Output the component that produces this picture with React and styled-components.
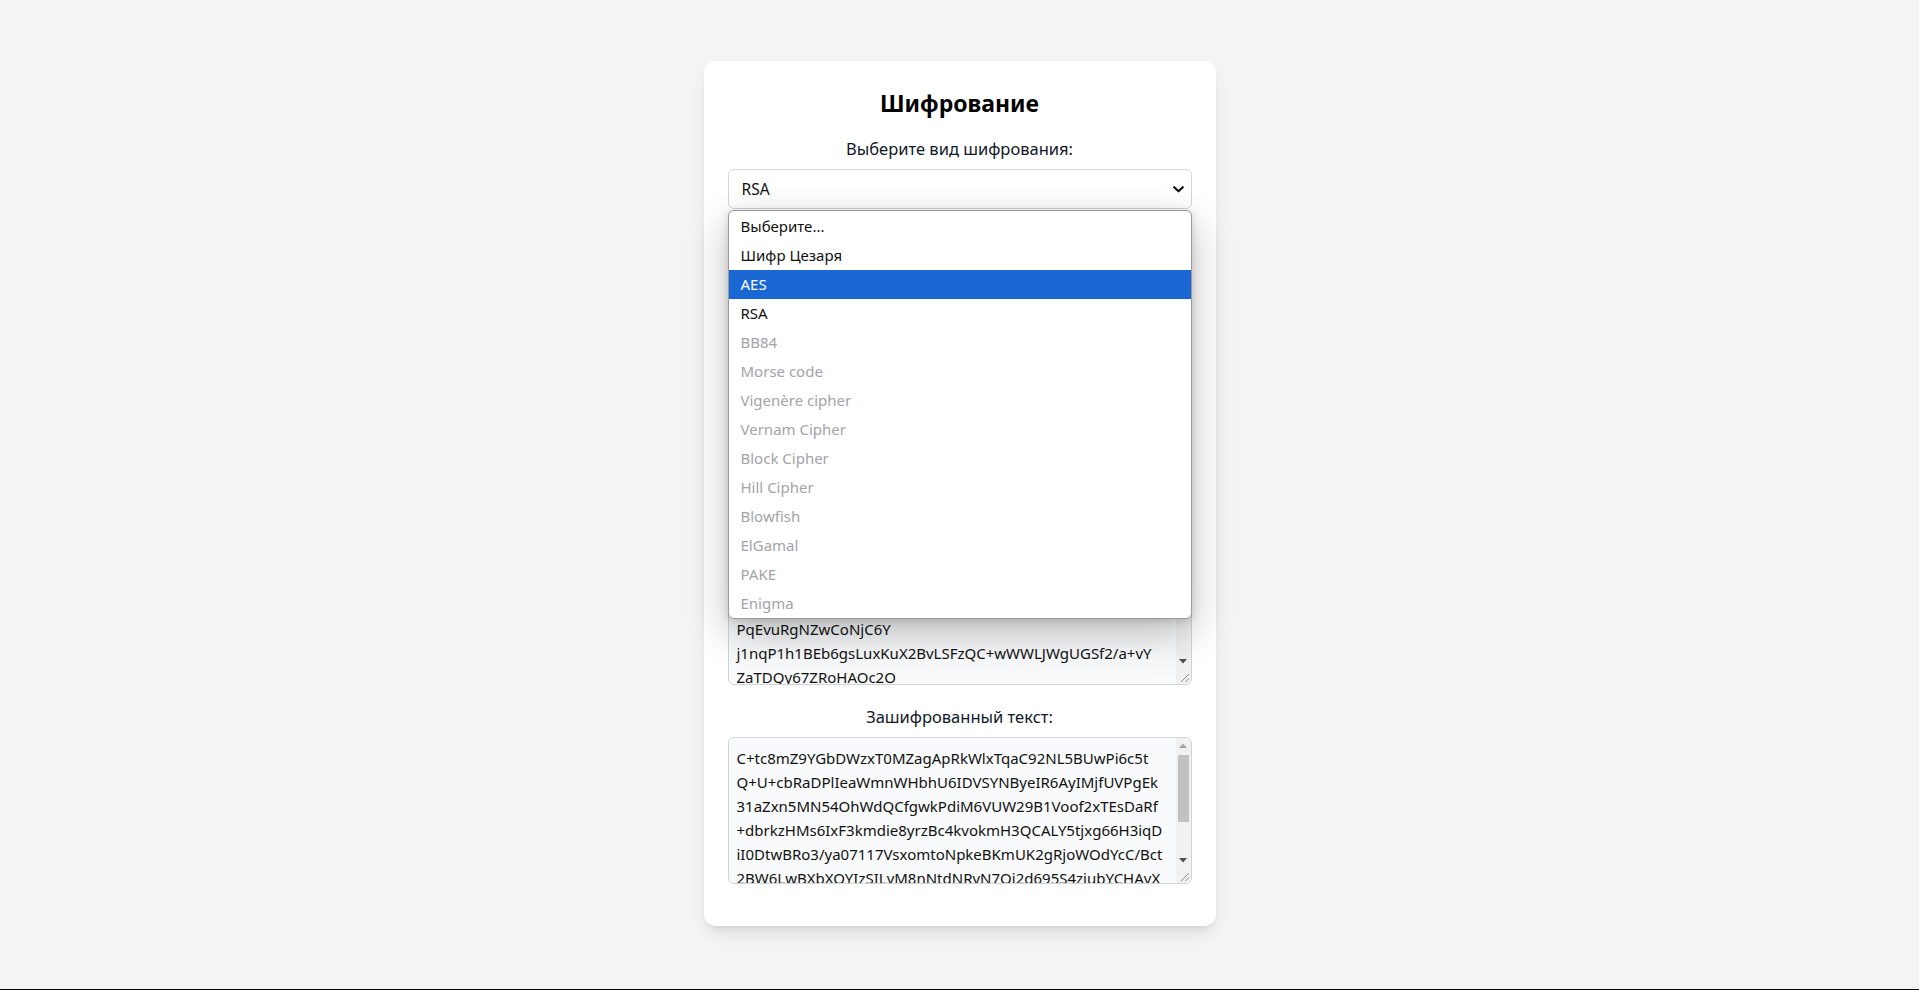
import React from 'react';
import styled, { createGlobalStyle } from 'styled-components';

const GlobalStyle = createGlobalStyle`
  html, body {
    margin: 0;
    padding: 0;
  }
  body {
    font-family: "Noto Sans", "Open Sans", sans-serif;
    color: #111827;
    background: #f3f4f6;
  }
`;

const Page = styled.div`
  box-sizing: border-box;
  min-height: 100vh;
  padding-top: 61px;
  background: #f3f4f6;
  border-bottom: 1px solid #000;
  display: flex;
  justify-content: center;
  align-items: flex-start;
`;

const Card = styled.div`
  box-sizing: border-box;
  width: 512px;
  background: #fff;
  border-radius: 12px;
  padding: 24px 24px 42px;
  box-shadow: 0 10px 15px -3px rgba(0, 0, 0, 0.1), 0 4px 6px -4px rgba(0, 0, 0, 0.1);
  display: flex;
  flex-direction: column;
`;

const Title = styled.h2`
  margin: 0 0 16px;
  font-size: 23px;
  line-height: 36px;
  font-weight: 700;
  text-align: center;
  color: #000;
`;

const Field = styled.div`
  display: flex;
  flex-direction: column;
  gap: 8px;
  margin-top: ${p => p.$offset || 0}px;
`;

const Label = styled.label`
  font-size: 16.5px;
  line-height: 24px;
  text-align: center;
  color: #111827;
`;

const SelectWrap = styled.div`
  position: relative;
`;

const SelectBox = styled.div`
  box-sizing: border-box;
  height: 40px;
  border: 1px solid #d1d5db;
  border-radius: 6px;
  background: #fff;
  padding: 0 7px 0 13px;
  display: flex;
  align-items: center;
  justify-content: space-between;
  font-size: 15.5px;
  color: #111;
`;

const Dropdown = styled.ul`
  position: absolute;
  top: calc(100% + 1px);
  left: 0;
  right: 0;
  margin: 0;
  padding: 1px 0 0;
  list-style: none;
  background: #fff;
  border: 1px solid #9a9a9a;
  border-radius: 6px;
  overflow: hidden;
  box-shadow: 0 14px 40px rgba(0, 0, 0, 0.26), 0 2px 8px rgba(0, 0, 0, 0.14);
  z-index: 10;
`;

const Option = styled.li`
  height: 29px;
  line-height: 29px;
  padding-left: 12px;
  font-size: 15px;
  color: ${p => (p.$selected ? '#fff' : p.$disabled ? '#a3a3ab' : '#111')};
  background: ${p => (p.$selected ? '#1a67d3' : 'transparent')};
`;

const TextFrame = styled.div`
  box-sizing: border-box;
  height: ${p => p.$height}px;
  border: 1px solid #d1d5db;
  border-radius: 6px;
  background: #f9fafb;
  overflow: hidden;
  display: flex;
`;

const TextArea = styled.textarea`
  flex: 1;
  min-width: 0;
  margin: 0;
  padding: 8px;
  border: 0;
  outline: none;
  background: transparent;
  font-family: "Noto Sans", "Open Sans", sans-serif;
  font-size: 15px;
  line-height: 24px;
  color: #111;
  white-space: pre;
  overflow: hidden;
  resize: none;
`;

const ScrollBar = styled.div`
  width: 15px;
  flex: none;
  display: flex;
  flex-direction: column;
  background: #f1f1f1;
`;

const ArrowButton = styled.div`
  height: 15px;
  flex: none;
  display: flex;
  align-items: center;
  justify-content: center;
`;

const Track = styled.div`
  flex: 1;
  padding: 0 2px;
`;

const Thumb = styled.div`
  margin-top: ${p => p.$top}px;
  height: ${p => p.$size}px;
  background: #c1c1c1;
`;

const Corner = styled.div`
  height: 15px;
  flex: none;
  display: flex;
`;

const options = [
  { label: 'Выберите...' },
  { label: 'Шифр Цезаря' },
  { label: 'AES', selected: true },
  { label: 'RSA' },
  { label: 'BB84', disabled: true },
  { label: 'Morse code', disabled: true },
  { label: 'Vigenère cipher', disabled: true },
  { label: 'Vernam Cipher', disabled: true },
  { label: 'Block Cipher', disabled: true },
  { label: 'Hill Cipher', disabled: true },
  { label: 'Blowfish', disabled: true },
  { label: 'ElGamal', disabled: true },
  { label: 'PAKE', disabled: true },
  { label: 'Enigma', disabled: true },
];

const sourceText = [
  '-----BEGIN PUBLIC KEY-----',
  'MIIBIjANBgkqhkiG9w0BAQEFAAOCAQ8AMIIBCgKCAQEAx3Qm',
  'k8Yt2Vb0cR7nH1pLw9ZsE4uFqJ6aD5mXoT3yGi0NhKv8BlQe',
  'Wz1RcP7dUfA2gS9jHtM4xLbVn6KoE3qYi5rCw0ZpD8aFhJu2',
  'Ns7TlGv1eXkB4mQy9WdR6oP3cIzH0fLaU5tE8jSgK2bVnM7w',
  'Yq4hC1xZr9Fp6DsA3uO0iT8lNeG5kJvB2mW7yHa1QcX4dRz',
  'Lf8tUo3gE6nP0sK9bM2wV5jI1qC7hY4rA8zT6xD3eF0pN9lS',
  'Gk2vB5uH7mQ1yW4cJ8oR0aZ3tX6iE9dL2fP5nU8sK1gV4hM',
  'Tb7wC0qY3jA6rO9zD2xI5lN8eG1kF4pS7uH0mB3vQ6yW9cJ',
  'Ra2oZ5tX8iE1dL4fP7nU0sK3gV6hM9bC2wQ5yJ8rA1oZ4tX',
  'Di7eL0fP3nU6sK9gV2hM5bC8wQ1yJ4rA7oZ0tX3iE6dL9fP',
  'Nu2sK5gV8hM1bC4wQ7yJ0rA3oZ6tX9iE2dL5fP8nU1sK4gV',
  'Hm7bC0wQ3yJ6rA9oZ2tX5iE8dL1fP4nU7sK0gV3hM6bC9wQ',
  'Yj2rA5oZ8tX1iE4dL7fP0nU3sK6gV9hM2bC5wQ8yJ1rA4oZ',
  'PqEvuRgNZwCoNjC6Y',
  'j1nqP1h1BEb6gsLuxKuX2BvLSFzQC+wWWLJWgUGSf2/a+vY',
  'ZaTDQy67ZRoHAOc2O',
  'Tx7iE0dL3fP6nU9sK2gV5hM8bC1wQ4yJ7rA0oZ3tX6iE9dL',
  'Fp2nU5sK8gV1hM4bC7wQ0yJ3rA6oZ9tX2iE5dL8fP1nU4sK',
  'IDAQAB',
  '-----END PUBLIC KEY-----',
].join('\n');

const cipherText = [
  'C+tc8mZ9YGbDWzxT0MZagApRkWlxTqaC92NL5BUwPi6c5t',
  'Q+U+cbRaDPlIeaWmnWHbhU6IDVSYNByeIR6AyIMjfUVPgEk',
  '31aZxn5MN54OhWdQCfgwkPdiM6VUW29B1Voof2xTEsDaRf',
  '+dbrkzHMs6IxF3kmdie8yrzBc4kvokmH3QCALY5tjxg66H3iqD',
  'iI0DtwBRo3/ya07117VsxomtoNpkeBKmUK2gRjoWOdYcC/Bct',
  '2BW6LwBXbXQYIzSILvM8nNtdNRvN7Qi2d695S4ziubYCHAvX',
  'k4Fh8Yq2rLmN7tWzP0sE3vBd6CjU1oXa9gQiK5nRyT8wHbZ',
  'Mv3pL6tX9eQ2nU5sK8gJ1hA4bC7wR0yD3oZ6fI9mT2xE5kN==',
].join('\n');

function Chevron() {
  return (
    <svg width="11" height="7" viewBox="0 0 11 7" fill="none">
      <path d="M1.2 1.2L5.5 5.3L9.8 1.2" stroke="#111" strokeWidth="2.2" strokeLinecap="round" strokeLinejoin="round" />
    </svg>
  );
}

function Arrow({ up, color }) {
  return (
    <svg width="8" height="5" viewBox="0 0 8 5">
      <path d={up ? 'M0 5L4 0.5L8 5Z' : 'M0 0L8 0L4 4.5Z'} fill={color} />
    </svg>
  );
}

function Grip() {
  return (
    <svg width="15" height="15" viewBox="0 0 15 15">
      <path d="M13 5L5 13M13 9.5L9.5 13" stroke="#8a8a8a" strokeWidth="1" />
    </svg>
  );
}

function ScrollText({ height, value, thumbTop, thumbSize }) {
  return (
    <TextFrame $height={height}>
      <TextArea readOnly value={value} />
      <ScrollBar>
        <ArrowButton>
          <Arrow up color="#a3a3a3" />
        </ArrowButton>
        <Track>
          <Thumb $top={thumbTop} $size={thumbSize} />
        </Track>
        <ArrowButton>
          <Arrow color="#505050" />
        </ArrowButton>
        <Corner>
          <Grip />
        </Corner>
      </ScrollBar>
    </TextFrame>
  );
}

export default function App() {
  return (
    <Page>
      <GlobalStyle />
      <Card>
        <Title>Шифрование</Title>
        <Field>
          <Label>Выберите вид шифрования:</Label>
          <SelectWrap>
            <SelectBox>
              <span>RSA</span>
              <Chevron />
            </SelectBox>
            <Dropdown>
              {options.map(o => (
                <Option key={o.label} $selected={o.selected} $disabled={o.disabled}>
                  {o.label}
                </Option>
              ))}
            </Dropdown>
          </SelectWrap>
        </Field>
        <Field $offset={31}>
          <Label>Публичный ключ:</Label>
          <ScrollText height={413} value={sourceText} thumbTop={2} thumbSize={200} />
        </Field>
        <Field $offset={20}>
          <Label>Зашифрованный текст:</Label>
          <ScrollText height={147} value={cipherText} thumbTop={2} thumbSize={67} />
        </Field>
      </Card>
    </Page>
  );
}
